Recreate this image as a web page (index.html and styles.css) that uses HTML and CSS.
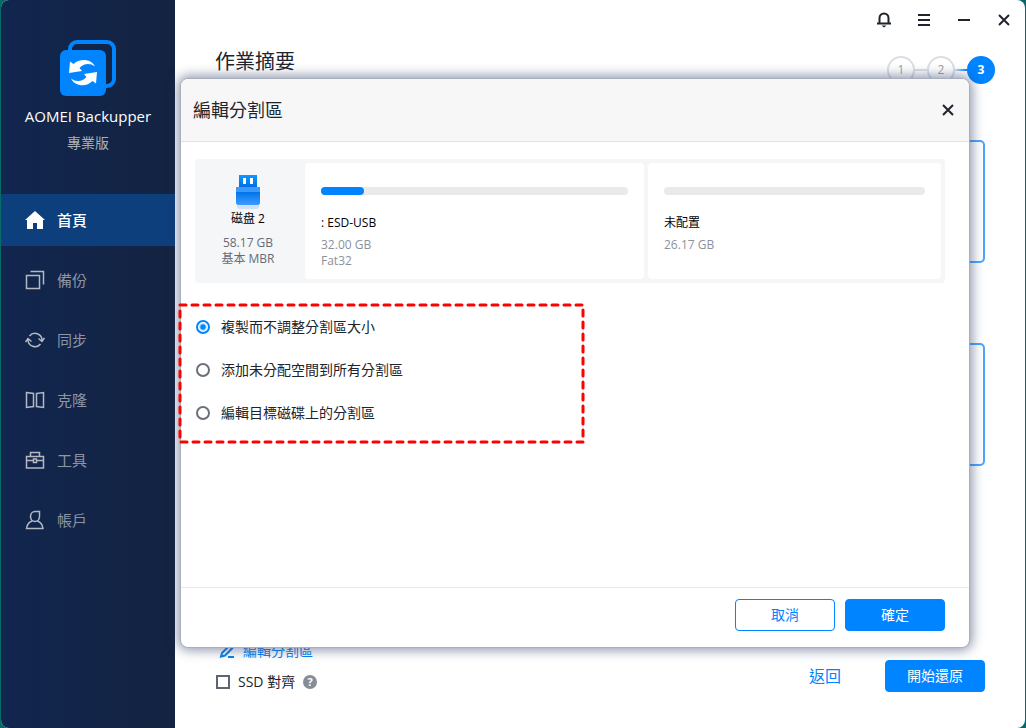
FILE: index.html
```html
<!DOCTYPE html>
<html lang="zh-Hant">
<head>
  <meta charset="UTF-8">
  <meta name="viewport" content="width=device-width, initial-scale=1.0">
  <title>AOMEI Backupper</title>
  <link rel="stylesheet" href="styles.css">
</head>
<body>
  <div class="app">
    <aside class="sidebar">
      <div class="brand">
        <svg class="logo" viewBox="0 0 56 56" width="56" height="56">
          <rect x="10" y="2" width="44" height="44" rx="7" fill="none" stroke="#0084ff" stroke-width="4"/>
          <rect x="0" y="10" width="46" height="46" rx="6" fill="#0084ff"/>
          <path d="M9 33 L10 21.500 L13.500 24 C19 18.500 31 18 35 26.500 C30 22.500 23.500 23.500 19.500 28 L22 31 Z" fill="#fff"/>
          <path d="M37 32 L36 43.500 L32.500 41 C27 47 15 47 11 38.500 C16 42.500 22.500 41.500 26.500 37 L24 34 Z" fill="#fff"/>
        </svg>
        <div class="brand-name">AOMEI Backupper</div>
        <div class="brand-edition">專業版</div>
      </div>
      <nav class="menu">
        <a href="#" class="menu-item active">
          <svg viewBox="0 0 20 20" width="20" height="20"><path d="M10 1 L20 10 H18 V19 H12 V13 H8 V19 H2 V10 H0 Z" fill="#fff"/></svg>
          首頁
        </a>
        <a href="#" class="menu-item">
          <svg viewBox="0 0 20 20" width="20" height="20"><path d="M1.500 5.500 H14.500 V18.500 H1.500 Z M5.500 1.500 H18.500 V14.500"/></svg>
          備份
        </a>
        <a href="#" class="menu-item">
          <svg viewBox="0 0 20 20" width="20" height="20"><path d="M4.500 6 A7 7 0 0 1 17 10.500 M15.500 14 A7 7 0 0 1 3 9.500 M0.500 12 L3 8.500 L6.500 11.500 M13.500 8.500 L17 11.500 L19.500 8"/></svg>
          同步
        </a>
        <a href="#" class="menu-item">
          <svg viewBox="0 0 20 20" width="20" height="20"><path d="M1.500 2.500 L8.500 3.500 V16.500 L1.500 17.500 Z M11.500 3.500 L18.500 2.500 V17.500 L11.500 16.500 Z"/></svg>
          克隆
        </a>
        <a href="#" class="menu-item">
          <svg viewBox="0 0 20 20" width="20" height="20"><path d="M1.500 6.500 H18.500 V18 H1.500 Z M5.500 6.500 V2.500 H14.500 V6.500 M1.500 10.500 H8 M12 10.500 H18.500 M8.500 9 H11.500 V12.500 H8.500 Z"/></svg>
          工具
        </a>
        <a href="#" class="menu-item">
          <svg viewBox="0 0 20 20" width="20" height="20"><path d="M14.500 1.500 H10 A4.500 5 0 1 0 14.500 6.500 Z M7 11 C4 12 2 14.500 1.500 18.500 H18 C17.500 14.500 15.500 12 12.500 11"/></svg>
          帳戶
        </a>
      </nav>
    </aside>

    <main class="main">
      <div class="titlebar">
        <button class="icon-btn" aria-label="通知">
          <svg viewBox="0 0 16 16" width="16" height="16"><path d="M3.500 11.500 V6 A4.500 4.500 0 0 1 12.500 6 V11.500 M1 11.500 H15"/><path d="M5.500 13.500 H10.500 L8 15.500 Z" class="solid"/></svg>
        </button>
        <button class="icon-btn" aria-label="選單">
          <svg viewBox="0 0 16 16" width="16" height="16"><path d="M2 3 H14 M2 8 H14 M2 13 H14"/></svg>
        </button>
        <button class="icon-btn" aria-label="最小化">
          <svg viewBox="0 0 16 16" width="16" height="16"><path d="M2 8 H14"/></svg>
        </button>
        <button class="icon-btn" aria-label="關閉">
          <svg viewBox="0 0 16 16" width="16" height="16"><path d="M3 3 L13 13 M13 3 L3 13"/></svg>
        </button>
      </div>

      <div class="page-head">
        <h1>作業摘要</h1>
        <div class="steps">
          <span class="step">1</span>
          <span class="line"></span>
          <span class="step">2</span>
          <span class="line last"></span>
          <span class="step current">3</span>
        </div>
      </div>

      <div class="cards">
        <div class="card"></div>
        <div class="card"></div>
      </div>

      <div class="page-foot">
        <div class="options">
          <a href="#" class="edit-link">
            <svg viewBox="0 0 16 16" width="16" height="16"><path d="M2 13.500 L3 10 L10 3 L13 5.500 L6 12.500 Z M9 14 H15"/></svg>
            編輯分割區
          </a>
          <div class="ssd">
            <input type="checkbox" id="ssd" class="checkbox">
            <label for="ssd">SSD 對齊</label>
            <span class="help">?</span>
          </div>
        </div>
        <div class="actions">
          <a href="#" class="back">返回</a>
          <button class="btn primary">開始還原</button>
        </div>
      </div>

      <section class="dialog" role="dialog" aria-labelledby="dialog-title">
        <header class="dialog-head">
          <h2 id="dialog-title">編輯分割區</h2>
          <button class="icon-btn" aria-label="關閉">
            <svg viewBox="0 0 16 16" width="16" height="16"><path d="M3 3 L13 13 M13 3 L3 13"/></svg>
          </button>
        </header>

        <div class="dialog-body">
          <div class="disk">
            <div class="disk-info">
              <svg viewBox="0 0 32 36" width="32" height="36">
                <defs>
                  <linearGradient id="plug" x1="0" y1="0" x2="0" y2="1">
                    <stop offset="0" stop-color="#0a9bff"/>
                    <stop offset="1" stop-color="#006be0"/>
                  </linearGradient>
                  <linearGradient id="case" x1="0" y1="0" x2="0" y2="1">
                    <stop offset="0" stop-color="#0073e8"/>
                    <stop offset="1" stop-color="#3f9cff"/>
                  </linearGradient>
                </defs>
                <path d="M5 28 H27 V31 Q27 34 24 34 H8 Q5 34 5 31 Z" fill="#cfe0f8"/>
                <rect x="7" y="0" width="18" height="13" fill="url(#plug)"/>
                <rect x="11" y="3" width="3" height="6" fill="#fff"/>
                <rect x="18" y="3" width="3" height="6" fill="#fff"/>
                <path d="M4 12 H28 V27 Q28 30 25 30 H7 Q4 30 4 27 Z" fill="#3c9aff"/>
                <path d="M4 17 H28 V27 Q28 30 25 30 H7 Q4 30 4 27 Z" fill="url(#case)"/>
              </svg>
              <span class="disk-name">磁盘 2</span>
              <span>58.17 GB</span>
              <span>基本 MBR</span>
            </div>
            <div class="partition">
              <div class="bar"><div class="used" style="width: 14%"></div></div>
              <span class="part-name">: ESD-USB</span>
              <span>32.00 GB</span>
              <span>Fat32</span>
            </div>
            <div class="partition free">
              <div class="bar"></div>
              <span class="part-name">未配置</span>
              <span>26.17 GB</span>
            </div>
          </div>

          <div class="choices">
            <svg class="highlight"><rect x="2" y="2"/></svg>
            <label><input type="radio" name="mode" checked>複製而不調整分割區大小</label>
            <label><input type="radio" name="mode">添加未分配空間到所有分割區</label>
            <label><input type="radio" name="mode">編輯目標磁碟上的分割區</label>
          </div>
        </div>

        <footer class="dialog-foot">
          <button class="btn">取消</button>
          <button class="btn primary">確定</button>
        </footer>
      </section>
    </main>
  </div>
</body>
</html>
```
FILE: styles.css
```css
* {
  box-sizing: border-box;
}
body {
  margin: 0;
  padding: 0 1px;
  background: #066a66;
  color: #20242c;
  font-family: "Open Sans", "Noto Sans CJK TC", sans-serif;
  font-size: 14px;
  line-height: 20px;
}
button, input {
  font: inherit;
  margin: 0;
}
a {
  text-decoration: none;
}
svg {
  flex: none;
  display: block;
}
.app {
  display: flex;
  min-height: 100vh;
  border-radius: 8px;
  overflow: hidden;
  background: #fff;
}

/* sidebar */
.sidebar {
  flex: none;
  width: 174px;
  background: linear-gradient(90deg, #11264f, #142341);
}
.brand {
  display: flex;
  flex-direction: column;
  align-items: center;
  height: 194px;
  padding-top: 40px;
}
.brand-name {
  margin-top: 10px;
  color: #fff;
  font-size: 15px;
}
.brand-edition {
  margin-top: 7px;
  color: #a9afbb;
}
.menu {
  display: flex;
  flex-direction: column;
  gap: 8px;
}
.menu-item {
  display: flex;
  align-items: center;
  gap: 12px;
  height: 52px;
  padding-left: 24px;
  color: #8d95a4;
  font-size: 15px;
}
.menu-item svg {
  fill: none;
  stroke: #b3b8c2;
  stroke-width: 1.5;
}
.menu-item.active {
  background: #0d3f7d;
  color: #fff;
  font-weight: 500;
}
.menu-item.active svg {
  stroke: none;
}

/* page */
.main {
  position: relative;
  flex: 1;
  display: flex;
  flex-direction: column;
}
.titlebar {
  display: flex;
  justify-content: flex-end;
  align-items: center;
  gap: 16px;
  height: 40px;
  padding-right: 9px;
}
.icon-btn {
  display: flex;
  align-items: center;
  justify-content: center;
  width: 24px;
  height: 24px;
  padding: 0;
  border: 0;
  background: none;
  cursor: pointer;
}
.icon-btn svg {
  fill: none;
  stroke: #20242c;
  stroke-width: 2;
}
.icon-btn .solid {
  fill: #20242c;
  stroke: none;
}
.page-head {
  display: flex;
  justify-content: space-between;
  padding: 8px 30px 0 40px;
}
h1 {
  margin: 0;
  font-size: 20px;
  font-weight: 400;
  line-height: 28px;
}
.steps {
  display: flex;
  align-items: center;
  height: 28px;
  margin-top: 8px;
}
.step {
  width: 28px;
  height: 28px;
  border: 2px solid #dcdfe6;
  border-radius: 50%;
  color: #9aa0ac;
  font-size: 12px;
  line-height: 24px;
  text-align: center;
}
.step.current {
  border-color: #0084ff;
  background: #0084ff;
  color: #fff;
  font-weight: 700;
}
.line {
  width: 12px;
  height: 2px;
  background: #dcdfe6;
}
.line.last {
  background: linear-gradient(90deg, #dcdfe6, #0084ff);
}
.cards {
  display: flex;
  flex-direction: column;
  gap: 80px;
  padding: 56px 40px 0;
}
.card {
  height: 123px;
  border: 2px solid #4aa5ff;
  border-radius: 5px;
}
.page-foot {
  display: flex;
  justify-content: space-between;
  align-items: flex-end;
  margin-top: auto;
  padding: 0 40px 36px 41px;
}
.options {
  display: flex;
  flex-direction: column;
  gap: 11px;
}
.edit-link {
  display: flex;
  align-items: center;
  gap: 8px;
  padding-left: 3px;
  color: #0a84f5;
}
.edit-link svg {
  fill: none;
  stroke: #0a84f5;
  stroke-width: 2;
}
.ssd {
  display: flex;
  align-items: center;
  gap: 8px;
}
.checkbox {
  appearance: none;
  width: 14px;
  height: 14px;
  border: 2px solid #5f6570;
}
.checkbox:checked {
  background: #0084ff;
}
.help {
  width: 14px;
  height: 14px;
  border-radius: 50%;
  background: #868c98;
  color: #fff;
  font-size: 11px;
  font-weight: 700;
  line-height: 14px;
  text-align: center;
}
.actions {
  display: flex;
  align-items: center;
  gap: 44px;
}
.back {
  color: #0084ff;
  font-size: 16px;
}
.btn {
  width: 100px;
  height: 32px;
  padding: 0;
  border: 1px solid #0084ff;
  border-radius: 4px;
  background: #fff;
  color: #0084ff;
  cursor: pointer;
}
.btn.primary {
  background: #0084ff;
  color: #fff;
}

/* dialog */
.dialog {
  position: absolute;
  top: 78px;
  right: 55px;
  bottom: 80px;
  left: 5px;
  display: flex;
  flex-direction: column;
  border: 1px solid #a9afbd;
  border-radius: 8px;
  background: #fff;
  box-shadow: 0 0 12px 2px rgba(40, 58, 100, 0.55);
}
.dialog-head {
  display: flex;
  justify-content: space-between;
  align-items: center;
  height: 63px;
  padding: 0 9px 0 12px;
  border-bottom: 1px solid #e2e3e5;
  border-radius: 7px 7px 0 0;
  background: #f7f7f7;
}
h2 {
  margin: 0;
  font-size: 18px;
  font-weight: 400;
  line-height: 24px;
}
.dialog-body {
  flex: 1;
  padding: 17px 24px 0 14px;
}
.disk {
  display: flex;
  gap: 4px;
  padding: 4px;
  border-radius: 4px;
  background: #f5f6f8;
  font-size: 12px;
  line-height: 16px;
}
.disk-info {
  flex: none;
  display: flex;
  flex-direction: column;
  align-items: center;
  width: 102px;
  padding: 12px 4px 0 0;
  color: #666c76;
}
.disk-name {
  margin-bottom: 8px;
  color: #000;
}
.partition {
  flex: 307;
  display: flex;
  flex-direction: column;
  height: 116px;
  padding: 24px 16px 0;
  border-radius: 4px;
  background: #fff;
  color: #8b919b;
}
.partition.free {
  flex: 261;
}
.bar {
  height: 8px;
  border-radius: 4px;
  background: #eaeaea;
}
.used {
  height: 8px;
  border-radius: 4px;
  background: #0084ff;
}
.part-name {
  margin: 20px 0 6px;
  color: #000;
}
.choices {
  position: relative;
  display: flex;
  flex-direction: column;
  gap: 23px;
  width: 390px;
  margin-top: 20px;
  padding: 14px 0 21px;
}
.choices label {
  display: flex;
  align-items: center;
  gap: 11px;
}
.choices input {
  appearance: none;
  width: 14px;
  height: 14px;
  margin-left: 1px;
  border: 2px solid #6a707b;
  border-radius: 50%;
}
.choices input:checked {
  border-color: #0084ff;
  background: radial-gradient(#0084ff 2px, #fff 4px);
}
/* dashed frame around the choices, runs over the dialog edge */
.highlight {
  position: absolute;
  top: 0;
  left: -17px;
  width: calc(100% + 17px);
  height: 100%;
  pointer-events: none;
}
.highlight rect {
  width: calc(100% - 4px);
  height: calc(100% - 4px);
  fill: none;
  stroke: #ff0000;
  stroke-width: 3;
  stroke-linecap: round;
  stroke-dasharray: 6 6;
}
.dialog-foot {
  display: flex;
  justify-content: flex-end;
  gap: 10px;
  padding: 11px 24px 16px;
  border-top: 1px solid #e8e8ea;
}
```
